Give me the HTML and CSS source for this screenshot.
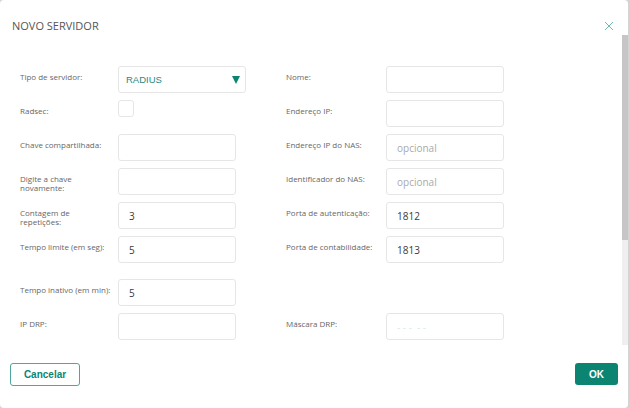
FILE: index.html
```html
<!DOCTYPE html>
<html lang="pt">
<head>
	<meta charset="UTF-8" />
	<meta name="viewport" content="width=device-width, initial-scale=1.0" />
	<title>Novo servidor</title>
	<link rel="stylesheet" href="styles.css">
</head>
<body>
	<div class="dialog" role="dialog" aria-labelledby="dialog-title">
		<header class="dialog__head">
			<h2 id="dialog-title">Novo servidor</h2>
			<button class="dialog__close" aria-label="Fechar">
				<svg viewBox="0 0 10 10" width="10" height="10" role="img">
					<title>Fechar</title>
					<path d="M1,1L9,9M9,1L1,9" />
				</svg>
			</button>
		</header>

		<div class="dialog__body">
			<form class="form">
				<label class="form__label" for="tipo">Tipo de servidor:</label>
				<div class="select">
					<select id="tipo">
						<option>RADIUS</option>
						<option>TACACS+</option>
					</select>
					<svg class="select__arrow" viewBox="0 0 8 8" width="8" height="8">
						<path d="M0,0H8L4,8Z" />
					</svg>
				</div>
				<span></span>
				<label class="form__label" for="nome">Nome:</label>
				<input class="field" id="nome" type="text">

				<label class="form__label" for="radsec">Radsec:</label>
				<input class="check" id="radsec" type="checkbox">
				<span></span>
				<label class="form__label" for="ip">Endereço IP:</label>
				<input class="field" id="ip" type="text">

				<label class="form__label" for="chave">Chave compartilhada:</label>
				<input class="field" id="chave" type="password">
				<span></span>
				<label class="form__label" for="nas-ip">Endereço IP do NAS:</label>
				<input class="field" id="nas-ip" type="text" placeholder="opcional">

				<label class="form__label" for="chave2">Digite a chave novamente:</label>
				<input class="field" id="chave2" type="password">
				<span></span>
				<label class="form__label" for="nas-id">Identificador do NAS:</label>
				<input class="field" id="nas-id" type="text" placeholder="opcional">

				<label class="form__label" for="retries">Contagem de repetições:</label>
				<input class="field" id="retries" type="text" value="3">
				<span></span>
				<label class="form__label" for="auth-port">Porta de autenticação:</label>
				<input class="field" id="auth-port" type="text" value="1812">

				<label class="form__label" for="timeout">Tempo limite (em seg):</label>
				<input class="field" id="timeout" type="text" value="5">
				<span></span>
				<label class="form__label" for="acct-port">Porta de contabilidade:</label>
				<input class="field" id="acct-port" type="text" value="1813">

				<label class="form__label form__spaced" for="idle">Tempo inativo (em min):</label>
				<input class="field form__spaced" id="idle" type="text" value="5">
				<span></span>
				<span></span>
				<span></span>

				<label class="form__label" for="drp-ip">IP DRP:</label>
				<input class="field" id="drp-ip" type="text">
				<span></span>
				<label class="form__label" for="drp-mask">Máscara DRP:</label>
				<input class="field field--faint" id="drp-mask" type="text" placeholder="- - -  - -">
			</form>
			<div class="scrollbar" aria-hidden="true">
				<div class="scrollbar__thumb"></div>
			</div>
		</div>

		<footer class="dialog__foot">
			<button class="btn btn--outline">Cancelar</button>
			<button class="btn btn--primary">OK</button>
		</footer>
	</div>
</body>
</html>
```

FILE: styles.css
```css
:root {
	--teal: #0b8572;
	--teal-light: #6fbab0;
	--border: #e6e6e6;
	--label: #666;
	--text: #3a3a3a;
}

*,
*:after,
*:before {
	box-sizing: border-box;
}

body {
	margin: 0;
	background: #d4d4d4;
	font-family: 'Open Sans', sans-serif;
	width: 630px;
	height: 408px;
	overflow: hidden;
}

.dialog {
	width: 628px;
	height: 408px;
	background: #fff;
	border-radius: 4px;
	display: flex;
	flex-direction: column;
}

.dialog__head {
	height: 35px;
	padding: 16px 14px 0 12px;
	display: flex;
	justify-content: space-between;
	align-items: center;
	flex: none;
}

.dialog__head h2 {
	margin: 0;
	font-size: 11px;
	line-height: 16px;
	font-weight: 400;
	text-transform: uppercase;
	color: #555;
}

.dialog__close {
	border: 0;
	padding: 0;
	background: none;
	width: 10px;
	height: 10px;
	display: grid;
}

.dialog__close path {
	stroke: var(--teal-light);
	stroke-width: 1;
	fill: none;
}

.dialog__body {
	height: 310px;
	flex: none;
	display: flex;
	overflow: hidden;
}

.scrollbar {
	width: 6px;
	flex: none;
	background: #efefef;
	display: flex;
	flex-direction: column;
}

.scrollbar__thumb {
	height: 205px;
	background: #c6c6c6;
}

.form {
	flex: 1;
	padding: 31px 0 0 20px;
	display: grid;
	grid-template-columns: 98px 130px 38px 100px 118px;
	grid-auto-rows: auto;
	align-content: start;
	row-gap: 7px;
	align-items: start;
}

.form__label {
	font-size: 8px;
	line-height: 9px;
	padding-top: 6px;
	padding-right: 6px;
	color: var(--label);
}

.form__spaced {
	margin-top: 9px;
}

.field {
	width: 118px;
	height: 27px;
	border: 1px solid var(--border);
	border-radius: 3px;
	padding: 0 10px;
	font-family: 'Open Sans', sans-serif;
	font-size: 10px;
	color: var(--text);
	outline: none;
}

.field::placeholder {
	color: #aaa;
}

.field--faint::placeholder {
	color: #d8ebe7;
}

.select {
	position: relative;
	width: 128px;
	height: 27px;
}

.select select {
	appearance: none;
	width: 100%;
	height: 100%;
	border: 1px solid var(--border);
	border-radius: 3px;
	background: #fff;
	padding: 0 7px;
	font-family: 'Liberation Sans', Arial, sans-serif;
	font-size: 9.5px;
	color: #2a8a7e;
	outline: none;
}

.select__arrow {
	position: absolute;
	right: 6px;
	top: 10px;
	fill: var(--teal);
	pointer-events: none;
}

.check {
	appearance: none;
	margin: 0;
	width: 16px;
	height: 17px;
	border: 1px solid var(--border);
	border-radius: 3px;
	background: #fff;
}

.dialog__foot {
	flex: none;
	display: flex;
	justify-content: space-between;
	align-items: flex-start;
	padding: 18px 10px 0;
}

.btn {
	height: 23px;
	border-radius: 3px;
	font-family: 'Liberation Sans', Arial, sans-serif;
	font-weight: 700;
	font-size: 10px;
	padding: 0;
}

.btn--outline {
	width: 70px;
	background: #fff;
	color: var(--teal);
	border: 1.5px solid #4fa79b;
}

.btn--primary {
	width: 43px;
	background: var(--teal);
	color: #fff;
	border: 0;
	height: 22px;
}
```
